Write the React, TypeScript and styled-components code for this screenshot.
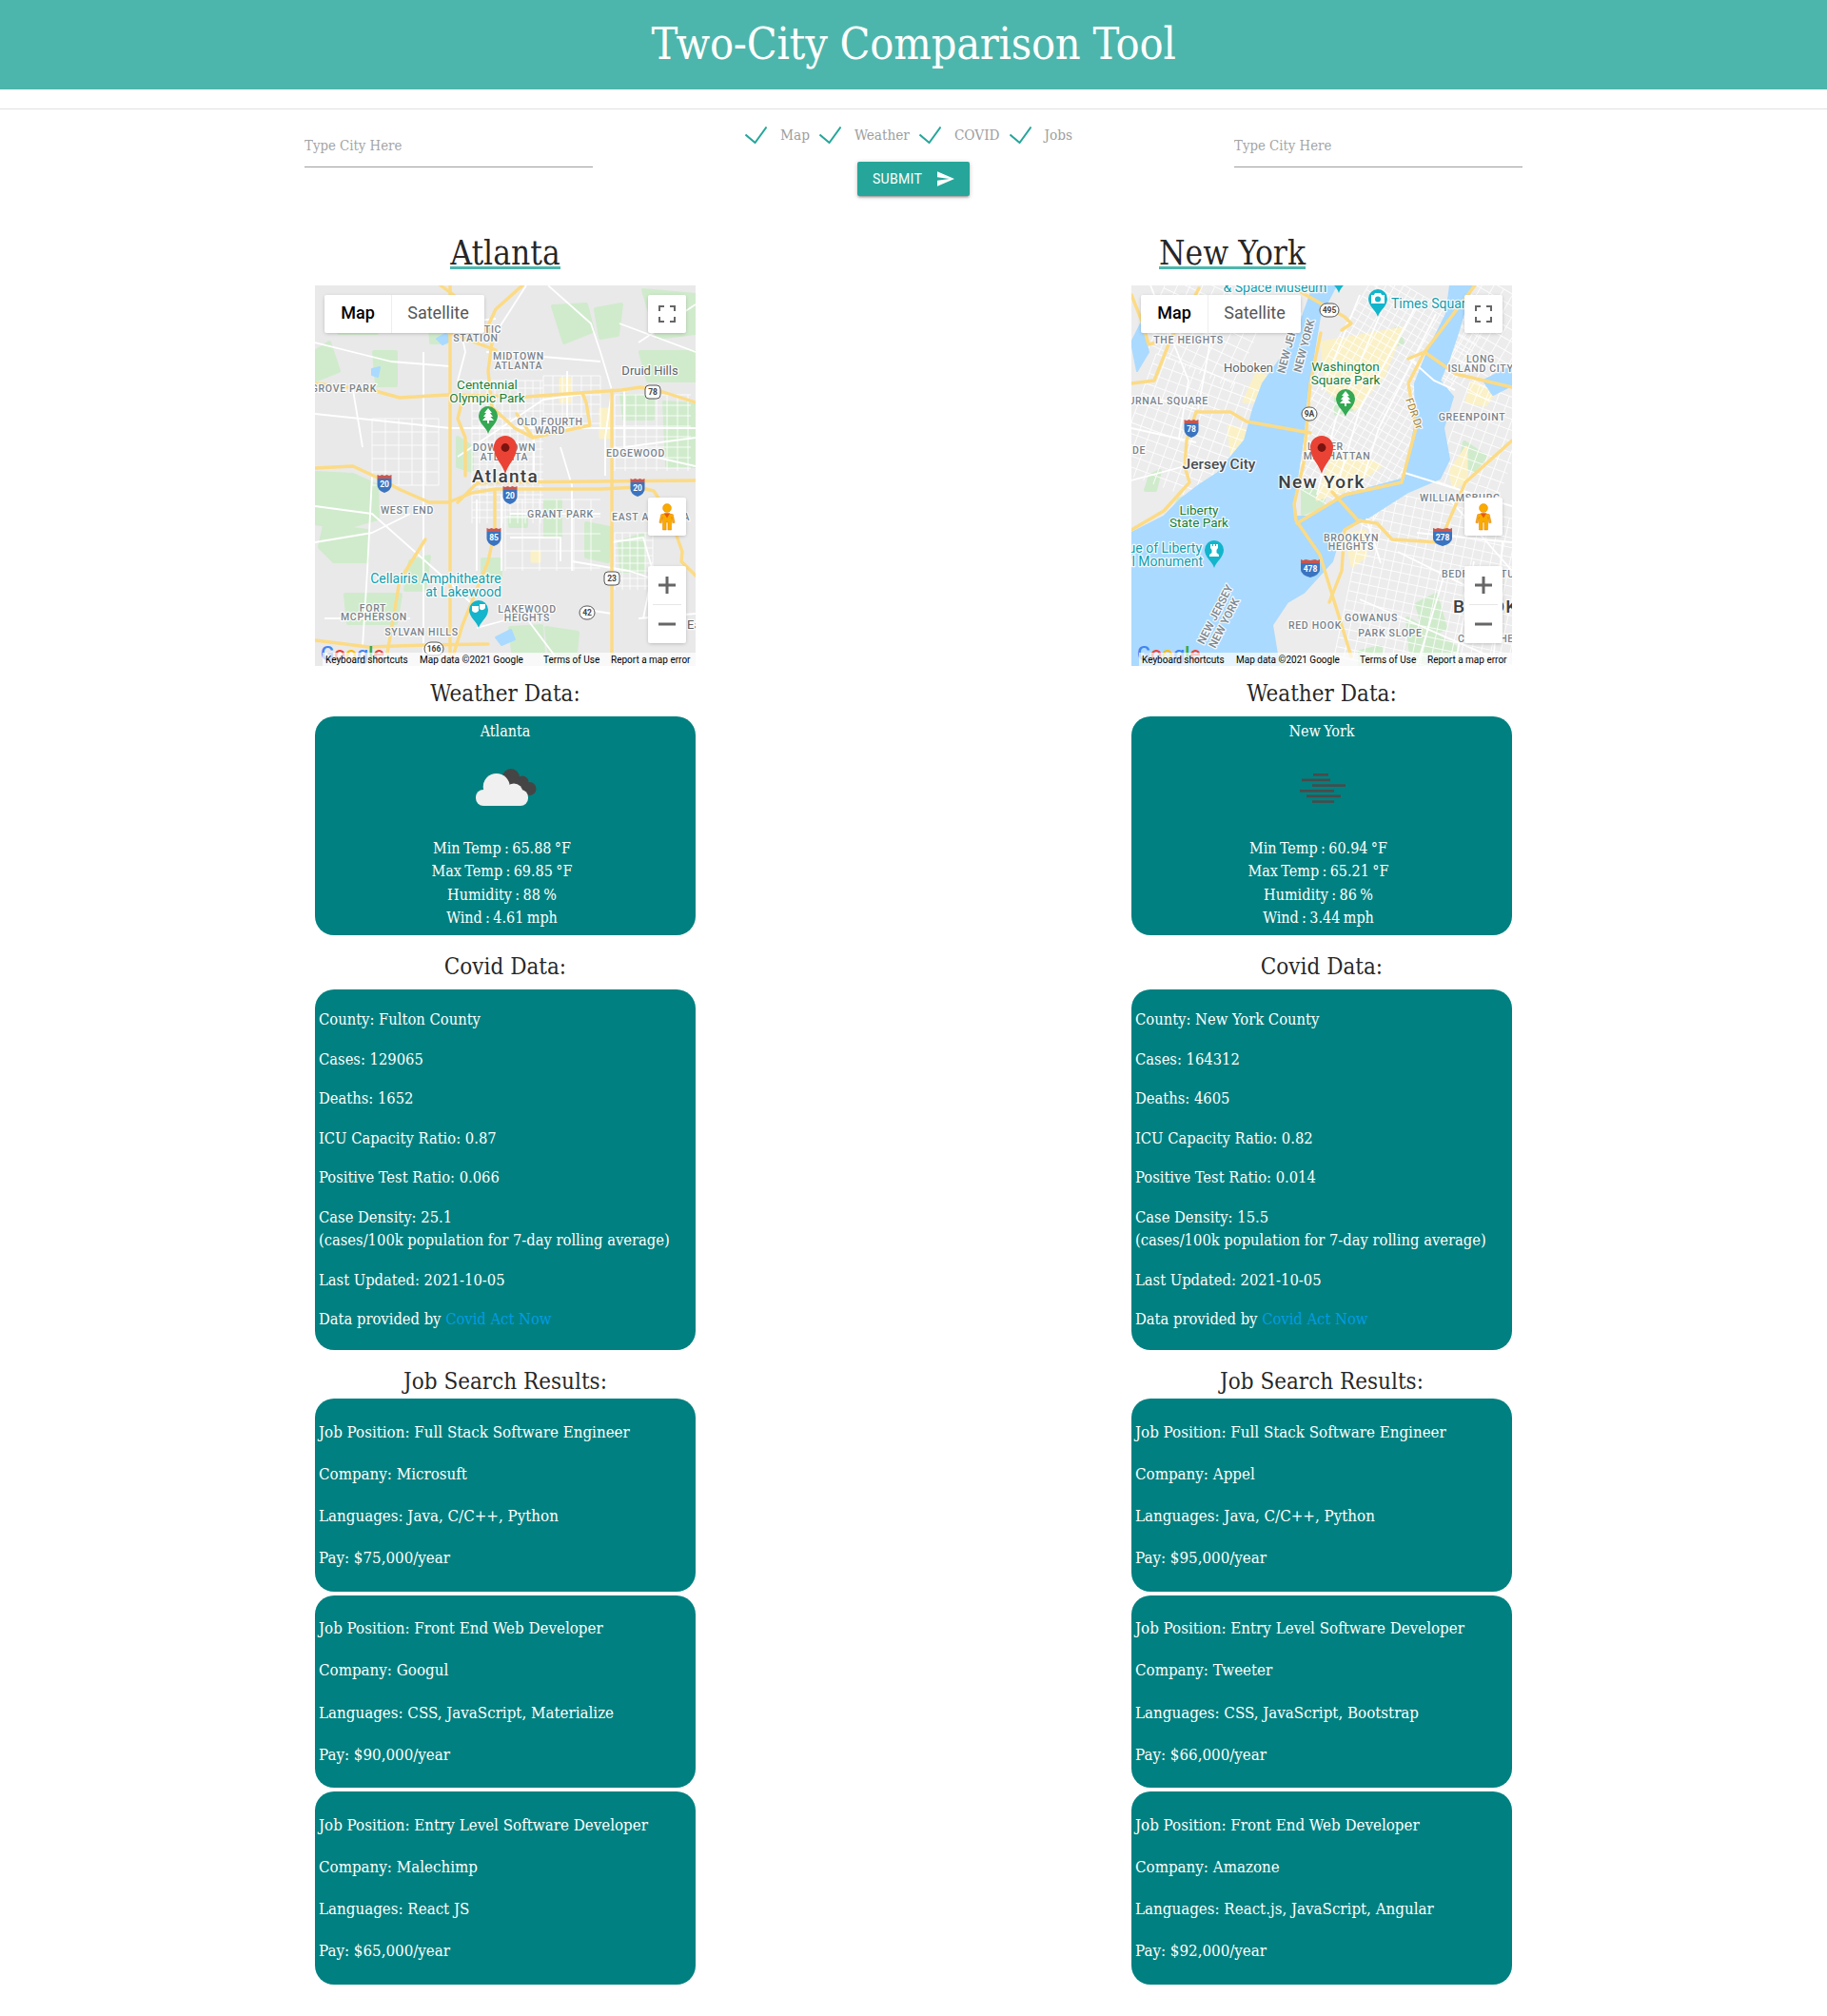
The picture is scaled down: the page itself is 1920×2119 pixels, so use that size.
import React from "react";
import styled, { createGlobalStyle, css } from "styled-components";

const SERIF = `"DejaVu Serif Condensed", "DejaVu Serif", "Liberation Serif", serif`;
const ROBOTO = `Roboto, "Liberation Sans", sans-serif`;

const GlobalStyle = createGlobalStyle`
  html, body { margin: 0; padding: 0; background: #fff; }
  body { font-family: ${SERIF}; color: rgba(0, 0, 0, 0.87); }
  * { box-sizing: border-box; }
`;

const Header = styled.header`
  height: 94px;
  padding-bottom: 3px;
  background: #4db6ac;
  display: flex;
  align-items: center;
  justify-content: center;
`;

const Title = styled.h1`
  margin: 0;
  font-size: 46.4px;
  font-weight: 400;
  color: #fff;
  letter-spacing: -0.2px;
`;

const Divider = styled.hr`
  margin: 20px 0 0;
  border: 0;
  height: 1px;
  background: #e0e0e0;
`;

const SearchForm = styled.form`
  height: 125px;
  padding: 0 320px;
  display: grid;
  grid-template-columns: 303px 1fr 303px;
`;

const CityInput = styled.input`
  width: 100%;
  height: 46px;
  margin-top: 15px;
  padding: 0;
  border: 0;
  border-bottom: 1px solid #9e9e9e;
  outline: none;
  background: transparent;
  font-family: ${SERIF};
  font-size: 14.8px;
  &::placeholder { color: #a5a5a5; opacity: 1; }
`;

const Middle = styled.div`
  display: flex;
  flex-direction: column;
  align-items: center;
`;

const Options = styled.div`
  display: flex;
  margin-top: 16px;
  height: 21px;
`;

const Option = styled.label`
  display: flex;
  align-items: center;
  margin-right: 10px;
  font-size: 15.2px;
  color: #9e9e9e;
  svg { margin-right: 14px; }
`;

const SubmitButton = styled.button`
  margin-top: 18px;
  width: 118px;
  height: 36px;
  display: flex;
  align-items: center;
  justify-content: center;
  gap: 16px;
  border: 0;
  border-radius: 2px;
  background: #26a69a;
  color: #fff;
  font-family: ${ROBOTO};
  font-size: 14px;
  letter-spacing: 0.3px;
  box-shadow: 0 2px 2px 0 rgba(0, 0, 0, 0.14), 0 3px 1px -2px rgba(0, 0, 0, 0.12), 0 1px 5px 0 rgba(0, 0, 0, 0.2);
`;

const CityTitles = styled.div`
  display: grid;
  grid-template-columns: 400px 400px;
  column-gap: 364px;
  padding-left: 331px;
  height: 60px;
`;

const CityTitle = styled.h2`
  justify-self: center;
  margin: 0;
  height: 43px;
  font-size: 35px;
  line-height: 52px;
  font-weight: 400;
  border-bottom: 3px solid #4db6ac;
`;

const Columns = styled.main`
  display: grid;
  grid-template-columns: 400px 400px;
  column-gap: 458px;
  justify-content: center;
  padding-bottom: 33px;
`;

const Column = styled.section`
  display: flex;
  flex-direction: column;
`;

const SectionHeading = styled.h3<{ $top: number; $bottom: number }>`
  margin: 0;
  padding: ${(p) => p.$top}px 0 ${(p) => p.$bottom}px;
  font-size: 24px;
  line-height: 30px;
  font-weight: 400;
  text-align: center;
`;

const Card = styled.div`
  background: #008080;
  color: #fff;
  border-radius: 20px;
  font-size: 16.4px;
  line-height: 24.5px;
`;

const WeatherCard = styled(Card)`
  height: 230px;
  padding-top: 4px;
  text-align: center;
  font-size: 16px;
  word-spacing: -1.2px;
  svg { display: block; margin: -2px auto 0; }
`;

const WeatherLine = styled.div`
  padding-right: 7px;
`;

const CovidCard = styled(Card)`
  height: 379px;
  padding: 20px 4px 0;
  p { margin: 0 0 17px; }
  a { color: #039be5; text-decoration: none; }
`;

const JobList = styled.div`
  display: flex;
  flex-direction: column;
  gap: 4px;
`;

const JobCard = styled(Card)`
  height: 202.5px;
  padding: 22.5px 4px 0;
  font-size: 16.8px;
  p { margin: 0 0 19.8px; }
`;

/* ---------- map ---------- */

const MapFrame = styled.div`
  position: relative;
  width: 400px;
  height: 400px;
  overflow: hidden;
  font-family: ${ROBOTO};
`;

const MapDrawing = styled.svg`
  display: block;
`;

const labelKinds = {
  area: css`
    font-size: 10.5px;
    font-weight: 500;
    letter-spacing: 0.7px;
    fill: #79838c;
  `,
  place: css`
    font-size: 13px;
    fill: #5f6368;
  `,
  town: css`
    font-size: 15.5px;
    font-weight: 500;
    fill: #4a4d50;
  `,
  park: css`
    font-size: 13.5px;
    fill: #188038;
  `,
  poi: css`
    font-size: 14px;
    fill: #129eaf;
  `,
  city: css`
    font-size: 19px;
    font-weight: 500;
    letter-spacing: 1.3px;
    fill: #3c4043;
  `,
  road: css`
    font-size: 11px;
    fill: #a5802f;
  `,
  state: css`
    font-size: 11.5px;
    font-weight: 500;
    fill: #80868b;
  `,
};

type LabelKind = keyof typeof labelKinds;

const MapLabel = styled.text<{ $kind: LabelKind }>`
  font-family: ${ROBOTO};
  paint-order: stroke;
  stroke: rgba(255, 255, 255, 0.85);
  stroke-width: 2.5px;
  stroke-linejoin: round;
  ${(p) => labelKinds[p.$kind]}
`;

const ShieldText = styled.text`
  font-family: ${ROBOTO};
  font-size: 8.5px;
  font-weight: 700;
  text-anchor: middle;
`;

const GoogleMark = styled.text`
  font-family: ${ROBOTO};
  font-size: 21px;
  font-weight: 500;
`;

const ControlBox = styled.div`
  position: absolute;
  background: #fff;
  border-radius: 2px;
  box-shadow: 0 1px 4px -1px rgba(0, 0, 0, 0.3);
`;

const MapTypes = styled(ControlBox)`
  top: 10px;
  left: 10px;
  width: 168px;
  height: 40px;
  display: grid;
  grid-template-columns: 70px 98px;
`;

const MapType = styled.span<{ $active?: boolean }>`
  display: flex;
  align-items: center;
  justify-content: center;
  padding-bottom: 4px;
  font-size: 18px;
  font-weight: ${(p) => (p.$active ? 500 : 400)};
  color: ${(p) => (p.$active ? "#000" : "#565656")};
  & + & { border-left: 1px solid #eee; }
`;

const IconControl = styled(ControlBox)<{ $top: number }>`
  top: ${(p) => p.$top}px;
  right: 10px;
  width: 40px;
  height: 40px;
  display: flex;
  align-items: center;
  justify-content: center;
`;

const ZoomControl = styled(ControlBox)`
  top: 295px;
  right: 10px;
  width: 40px;
  height: 81px;
  display: grid;
  grid-template-rows: 40px 1px 40px;
  justify-items: center;
  align-items: center;
`;

const ZoomRule = styled.div`
  width: 30px;
  height: 1px;
  background: #e6e6e6;
`;

const Attribution = styled.div`
  position: absolute;
  left: 8px;
  right: 0;
  bottom: 0;
  height: 14px;
  padding-left: 3px;
  display: grid;
  grid-template-columns: 99px 130px 71px auto;
  align-items: center;
  background: rgba(255, 255, 255, 0.7);
  font-size: 10px;
  color: #000;
  white-space: nowrap;
`;

type Label = [LabelKind, string, number, number, ("start" | "middle" | "end")?, number?];
type Shield = ["i" | "us" | "st", string, number, number];
type Poi = ["park" | "show" | "photo" | "statue", number, number];
// x, y, width, height, spacing, rotation
type StreetGrid = [number, number, number, number, number, number];

type MapData = {
  land: string;
  water?: string[];
  parks: string[];
  blocks?: string[];
  grids: StreetGrid[];
  minor: string[];
  bridges?: string[];
  highways: string[];
  labels: Label[];
  shields: Shield[];
  pois: Poi[];
};

const atlanta: MapData = {
  land: "#e9e9e9",
  water: ["128,56 138,50 142,58 134,62", "60,88 68,86 66,96 60,94", "190,370 206,362 210,372 196,378"],
  parks: [
    "0,197 40,199 65,210 66,245 30,255 0,250",
    "10,252 55,258 55,290 20,290 5,275",
    "22,25 65,27 65,50 25,50",
    "62,70 85,70 85,105 65,105",
    "250,22 285,20 292,48 262,60",
    "295,25 322,20 318,52 300,55",
    "342,70 400,70 400,100 350,100",
    "367,123 400,125 400,190 370,190",
    "322,115 355,118 355,140 325,140",
    "242,226 258,226 258,263 242,263",
    "205,243 222,243 222,253 205,253",
    "176,288 195,288 195,310 176,310",
    "205,360 238,358 240,385 208,385",
    "243,360 276,365 274,387 246,384",
    "243,388 282,388 282,400 243,400",
    "32,325 90,325 85,355 35,355",
    "0,70 15,60 25,90 0,100",
    "345,5 400,10 400,50 360,55",
    "120,30 140,30 138,60 122,60",
    "150,160 165,170 165,195 150,190",
    "285,250 310,255 308,290 285,285",
    "320,270 345,262 345,300 322,300",
    "100,290 120,285 115,320 95,320",
  ],
  blocks: ["258,98 268,98 268,122 258,122", "228,280 236,280 236,290 228,290", "300,130 312,130 312,160 300,160"],
  grids: [
    [165, 100, 75, 150, 8, 0],
    [240, 95, 60, 55, 10, 0],
    [315, 115, 80, 80, 11, 0],
    [315, 260, 40, 60, 8, 0],
    [60, 140, 70, 70, 14, 0],
    [200, 225, 100, 75, 18, 0],
  ],
  minor: [
    "114,70 114,400", "0,135 142,150 230,150 400,150", "0,232 60,240 150,320 175,345", "60,200 55,300 50,380",
    "222,0 190,50", "245,0 290,40 300,70 312,110 305,160 305,200", "150,180 240,120 312,110", "196,220 196,300", "258,170 270,210 270,300",
    "170,225 170,300", "205,240 300,240", "205,265 258,265 258,290", "180,70 300,80", "265,90 265,145", "325,110 325,170 400,160",
    "340,60 400,20", "312,170 400,190", "270,290 330,300 360,310", "215,340 260,400", "170,360 225,345", "0,270 60,260 100,240",
    "312,270 345,265 355,300 345,350", "150,100 158,70 150,30", "0,60 80,80 142,85", "10,350 100,350", "340,350 400,345", "230,205 230,160",
    "320,40 400,70", "40,110 50,170", "280,340 312,345", "140,40 190,35",
  ],
  highways: [
    "0,192 40,190 72,205 88,214 120,228 140,228 165,218 190,214 300,214 340,212 356,216 372,240 386,280 385,290 400,305",
    "0,103 60,110 89,118 139,115 222,117 279,113 322,110 342,107 369,113 400,123",
    "142,0 142,400",
    "312,110 312,400",
    "150,228 170,208 189,207 400,205",
    "218,0 190,25 182,42 186,60 182,90 186,128 210,150 229,160 289,147 285,123 281,113",
    "132,0 170,28 186,60",
    "229,160 212,135",
    "189,217 189,257 182,290 155,357 146,387",
    "116,267 89,310 76,387",
    "155,120 150,140 158,160 158,200",
    "0,373 56,380 116,378 182,377",
    "142,50 190,68",
  ],
  labels: [
    ["area", "TIC", 187, 50, "middle"],
    ["area", "STATION", 169, 59, "middle"],
    ["area", "MIDTOWN", 214, 78, "middle"],
    ["area", "ATLANTA", 214, 88, "middle"],
    ["area", "GROVE PARK", 65, 112, "end"],
    ["area", "OLD FOURTH", 247, 147, "middle"],
    ["area", "WARD", 247, 156, "middle"],
    ["area", "DOWNTOWN", 199, 174, "middle"],
    ["area", "ATLANTA", 199, 184, "middle"],
    ["area", "EDGEWOOD", 337, 180, "middle"],
    ["area", "WEST END", 97, 240, "middle"],
    ["area", "GRANT PARK", 258, 244, "middle"],
    ["area", "EAST ATLANTA", 312, 247],
    ["area", "FORT", 61, 343, "middle"],
    ["area", "MCPHERSON", 62, 352, "middle"],
    ["area", "SYLVAN HILLS", 112, 368, "middle"],
    ["area", "LAKEWOOD", 223, 344, "middle"],
    ["area", "HEIGHTS", 223, 353, "middle"],
    ["place", "Druid Hills", 352, 94, "middle"],
    ["place", "East Point", 391, 361],
    ["park", "Centennial", 181, 109, "middle"],
    ["park", "Olympic Park", 181, 123, "middle"],
    ["poi", "Cellairis Amphitheatre", 127, 313, "middle"],
    ["poi", "at Lakewood", 156, 327, "middle"],
    ["city", "Atlanta", 200, 207, "middle"],
  ],
  shields: [
    ["i", "20", 73, 208],
    ["i", "20", 205, 220],
    ["i", "20", 339, 212],
    ["i", "85", 188, 264],
    ["us", "78", 355, 112],
    ["us", "23", 312, 308],
    ["st", "42", 286, 344],
    ["st", "166", 125, 382],
  ],
  pois: [
    ["park", 182, 127],
    ["show", 172, 331],
  ],
};

const newYork: MapData = {
  land: "#ececec",
  water: [
    "188,10 171,57 138,103 128,130 119,163 91,197 71,210 54,223 34,243 0,260 0,400 155,400 148,357 164,333 181,323 211,290 221,257 244,247 291,217 324,203 334,183 328,150 338,117 324,100 334,77 344,47 358,0 335,0 331,30 311,70 298,103 299,143 287,203 224,220 187,243 173,243 171,223 181,157 184,117 198,33 215,0 190,0",
    "0,60 10,40 18,70 6,90",
    "370,100 400,85 400,105 380,115",
  ],
  parks: [
    "50,225 90,212 102,240 105,262 60,262 40,245",
    "140,290 180,282 188,300 165,325 140,332 142,312",
    "215,100 232,100 232,130 215,135",
    "290,350 340,380 350,400 295,400",
    "240,385 262,380 262,400 240,400",
    "350,165 372,180 360,195 345,190",
    "120,395 160,390 160,400 120,400",
    "20,200 30,195 25,215 15,215",
    "270,50 280,45 285,60 272,65",
    "300,335 320,325 330,360 310,370",
    "180,215 205,215 200,232 180,240",
  ],
  blocks: [
    "200,60 285,45 265,95 235,130 205,110",
    "210,185 235,175 262,190 230,212 195,225",
    "102,148 120,152 116,186 106,186",
    "132,92 142,96 128,122 118,122",
    "335,195 352,170 352,206 338,212",
    "225,262 246,258 246,285 232,295",
    "358,102 382,112 372,126 352,122",
  ],
  grids: [
    [190, 0, 130, 240, 8, 30],
    [230, 230, 180, 180, 10, 12],
    [0, 90, 130, 130, 11, 20],
    [20, 0, 110, 90, 12, 25],
    [330, 0, 80, 110, 11, 30],
    [335, 110, 70, 110, 11, 20],
  ],
  minor: [
    "240,10 200,110", "270,10 215,140 195,220", "300,20 240,130 215,215", "320,30 260,150 240,215",
    "0,150 68,165", "0,205 56,190", "30,120 68,130", "20,0 60,100 50,160", "90,20 70,130",
    "330,220 400,300", "300,260 400,270", "280,280 400,340", "240,330 400,400", "330,300 300,400", "360,290 340,400", "390,270 380,400",
  ],
  bridges: ["284,196 400,232", "247,245 262,292", "291,76 318,100 340,110"],
  highways: [
    "68,133 104,133 121,143 188,155",
    "68,133 58,163 56,190 61,207 34,237 0,257",
    "188,103 181,187 171,230 173,247 198,283 231,390",
    "308,70 291,103 299,150 284,207 224,220 174,250",
    "211,217 238,247 258,250 274,267 324,270 351,207 400,163",
    "241,247 224,257 221,300 208,333",
    "178,7 224,33 231,40 221,47",
    "199,50 188,103",
    "361,0 308,70 291,77",
    "308,70 341,93 400,107",
    "0,103 24,100 41,57 71,3",
    "0,10 12,40 18,62 26,60",
  ],
  labels: [
    ["poi", "& Space Museum", 151, 7, "middle"],
    ["poi", "Times Square", 273, 24],
    ["area", "THE HEIGHTS", 60, 61, "middle"],
    ["place", "Hoboken", 123, 91, "middle"],
    ["state", "NEW JERSEY", 161, 93, "start", -75],
    ["state", "NEW YORK", 178, 92, "start", -75],
    ["park", "Washington", 225, 90, "middle"],
    ["park", "Square Park", 225, 104, "middle"],
    ["area", "LONG", 367, 81, "middle"],
    ["area", "ISLAND CITY", 367, 91, "middle"],
    ["area", "JOURNAL SQUARE", 81, 125, "end"],
    ["area", "GREENPOINT", 358, 142, "middle"],
    ["road", "FDR Dr", 288, 120, "start", 70],
    ["town", "Jersey City", 92, 193, "middle"],
    ["area", "DE", 1, 177],
    ["area", "LOWER", 204, 173, "middle"],
    ["area", "MANHATTAN", 216, 183, "middle"],
    ["area", "WILLIAMSBURG", 303, 227],
    ["park", "Liberty", 71, 241, "middle"],
    ["park", "State Park", 71, 254, "middle"],
    ["poi", "Statue of Liberty", 74, 281, "end"],
    ["poi", "National Monument", 75, 295, "end"],
    ["area", "BROOKLYN", 231, 269, "middle"],
    ["area", "HEIGHTS", 231, 278, "middle"],
    ["area", "BEDFORD-STUY", 326, 307],
    ["city", "BROOKLYN", 338, 344],
    ["area", "CROWN HEIGHTS", 343, 375],
    ["area", "GOWANUS", 252, 353, "middle"],
    ["area", "RED HOOK", 193, 361, "middle"],
    ["area", "PARK SLOPE", 272, 369, "middle"],
    ["state", "NEW JERSEY", 76, 378, "start", -63],
    ["state", "NEW YORK", 88, 382, "start", -63],
    ["city", "New York", 200, 213, "middle"],
  ],
  shields: [
    ["st", "495", 208, 26],
    ["st", "9A", 187, 135],
    ["i", "78", 63, 150],
    ["i", "278", 327, 264],
    ["i", "478", 188, 297],
  ],
  pois: [
    ["photo", 259, 4],
    ["park", 225, 109],
    ["statue", 87, 268],
    ["show", 218, -21],
  ],
};

const RoadShield = ({ type, text, x, y }: { type: Shield[0]; text: string; x: number; y: number }) => {
  if (type === "i") {
    const w = text.length > 2 ? 10 : 7.5;
    return (
      <g transform={`translate(${x} ${y})`}>
        <path d={`M${-w} -5 H${w} V2 Q${w} 7 0 10 Q${-w} 7 ${-w} 2 Z`} fill="#3a74c0" />
        <path d={`M${-w} -9 l2.5 1 l2.5 -1 l${w - 5} 1 l${w - 5} -1 l2.5 1 l2.5 -1 V-5 H${-w} Z`} fill="#c8564f" />
        <ShieldText y="3.5" fill="#fff">{text}</ShieldText>
      </g>
    );
  }
  const rx = text.length > 2 ? 10 : 8;
  return (
    <g transform={`translate(${x} ${y})`}>
      <rect x={-rx} y="-7" width={rx * 2} height="14" rx={type === "st" ? 7 : 4} fill="#fff" stroke="#444" strokeWidth="0.9" />
      <ShieldText y="3" fill="#444">{text}</ShieldText>
    </g>
  );
};

const PoiPin = ({ type, x, y }: { type: Poi[0]; x: number; y: number }) => {
  const fill = type === "park" ? "#34a853" : "#12b5cb";
  return (
    <g transform={`translate(${x} ${y})`}>
      <path d="M0 29 C-2 22 -10 18 -10 10 A10 10 0 1 1 10 10 C10 18 2 22 0 29 Z" fill={fill} />
      {type === "park" && <path d="M0 2 L4 7 H2 L5 11 H2.5 L6 15 H1 V18 H-1 V15 H-6 L-2.5 11 H-5 L-2 7 H-4 Z" fill="#fff" />}
      {type === "show" && (
        <>
          <path d="M-7 6 H0 V11 Q-3.5 15 -7 11 Z" fill="#fff" />
          <path d="M1 4 H7 V8 Q4 12 1 9 Z" fill="#fff" />
        </>
      )}
      {type === "photo" && (
        <path d="M-7 6 H-4 L-3 4 H3 L4 6 H7 V15 H-7 Z M0 7.5 A3 3 0 1 0 0 13.5 A3 3 0 1 0 0 7.5 Z" fill="#fff" fillRule="evenodd" />
      )}
      {type === "statue" && <path d="M-4 4 H-2 V6 H-1 V4 H1 V6 H2 V4 H4 V8 L2.5 10 V13 L5 15 V17 H-5 V15 L-2.5 13 V10 L-4 8 Z" fill="#fff" />}
    </g>
  );
};

const gridPath = ([x, y, w, h, step]: StreetGrid) => {
  let d = "";
  for (let i = 0; i <= w; i += step) d += `M${x + i} ${y}V${y + h}`;
  for (let j = 0; j <= h; j += step) d += `M${x} ${y + j}H${x + w}`;
  return d;
};

const CityMap = ({ data }: { data: MapData }) => (
  <MapFrame>
    <MapDrawing width="400" height="400" viewBox="0 0 400 400">
      <rect width="400" height="400" fill={data.land} />
      {data.parks.map((p) => (
        <polygon key={p} points={p} fill="#d0ebcc" stroke="#d0ebcc" strokeWidth="4" strokeLinejoin="round" />
      ))}
      {data.blocks?.map((p) => (
        <polygon key={p} points={p} fill="#fbf1c7" stroke="#fbf1c7" strokeWidth="3" strokeLinejoin="round" />
      ))}
      {data.grids.map((g) => (
        <path
          key={g.join()}
          d={gridPath(g)}
          fill="none"
          stroke="#fff"
          strokeWidth="1"
          opacity="0.85"
          transform={`rotate(${g[5]} ${g[0] + g[2] / 2} ${g[1] + g[3] / 2})`}
        />
      ))}
      {data.minor.map((p) => (
        <polyline key={p} points={p} fill="none" stroke="#fff" strokeWidth="1.8" strokeLinejoin="round" />
      ))}
      {data.water?.map((p) => (
        <polygon key={p} points={p} fill="#aadaff" stroke="#aadaff" strokeWidth="2" strokeLinejoin="round" />
      ))}
      {data.bridges?.map((p) => (
        <polyline key={p} points={p} fill="none" stroke="#fff" strokeWidth="2" />
      ))}
      {data.highways.map((p) => (
        <polyline key={p} points={p} fill="none" stroke="#fcdb85" strokeWidth="3.4" strokeLinejoin="round" strokeLinecap="round" />
      ))}
      {data.labels.map(([kind, text, x, y, anchor, rotate]) => (
        <MapLabel
          key={`${text}-${x}`}
          $kind={kind}
          x={x}
          y={y}
          textAnchor={anchor ?? "start"}
          transform={rotate ? `rotate(${rotate} ${x} ${y})` : undefined}
        >
          {text}
        </MapLabel>
      ))}
      {data.shields.map(([type, text, x, y]) => (
        <RoadShield key={`${text}-${x}`} type={type} text={text} x={x} y={y} />
      ))}
      {data.pois.map(([type, x, y]) => (
        <PoiPin key={`${type}-${x}`} type={type} x={x} y={y} />
      ))}
      <path d="M200 198 C197 187 188 182 188 170 A12 12 0 1 1 212 170 C212 182 203 187 200 198 Z" fill="#ea4335" />
      <circle cx="200" cy="170.5" r="4.4" fill="#7a1410" />
      <GoogleMark x="6" y="394">
        <tspan fill="#4285f4">G</tspan>
        <tspan fill="#ea4335">o</tspan>
        <tspan fill="#fbbc05">o</tspan>
        <tspan fill="#4285f4">g</tspan>
        <tspan fill="#34a853">l</tspan>
        <tspan fill="#ea4335">e</tspan>
      </GoogleMark>
    </MapDrawing>
    <MapTypes>
      <MapType $active>Map</MapType>
      <MapType>Satellite</MapType>
    </MapTypes>
    <IconControl $top={10}>
      <svg width="18" height="18" viewBox="0 0 18 18" fill="none" stroke="#666" strokeWidth="2">
        <path d="M1 6V1H6M12 1H17V6M17 12V17H12M6 17H1V12" />
      </svg>
    </IconControl>
    <IconControl $top={223}>
      <svg width="18" height="29" viewBox="0 0 20 32">
        <path
          d="M3 13 Q10 10 17 13 L19 22.5 L16.5 23 L15.2 16 L15 31 H11 V22 H9 V31 H5 L4.8 16 L3.5 23 L1 22.5 Z"
          fill="#f9ab00"
          stroke="#e37400"
          strokeWidth="0.5"
        />
        <circle cx="10" cy="5.5" r="5" fill="#f9ab00" stroke="#e37400" strokeWidth="0.4" />
        <path d="M6.5 11.5 H13.5 L10 17 Z" fill="#e8590c" />
      </svg>
    </IconControl>
    <ZoomControl>
      <svg width="18" height="18" viewBox="0 0 18 18" fill="#666">
        <path d="M7.5 0H10.5V7.5H18V10.5H10.5V18H7.5V10.5H0V7.5H7.5Z" />
      </svg>
      <ZoomRule />
      <svg width="18" height="18" viewBox="0 0 18 18" fill="#666">
        <path d="M0 7.5H18V10.5H0Z" />
      </svg>
    </ZoomControl>
    <Attribution>
      <span>Keyboard shortcuts</span>
      <span>Map data ©2021 Google</span>
      <span>Terms of Use</span>
      <span>Report a map error</span>
    </Attribution>
  </MapFrame>
);

/* ---------- weather icons ---------- */

const CloudIcon = () => (
  <svg width="100" height="100" viewBox="0 0 100 100">
    <g fill="#454545">
      <circle cx="56" cy="37" r="9" />
      <circle cx="68" cy="42" r="6.5" />
      <circle cx="75.5" cy="49" r="7" />
      <path d="M52 34 L72 42 L72 56 L58 52 Z" />
    </g>
    <g fill="#f0f0f0">
      <circle cx="40.7" cy="47" r="14" />
      <circle cx="59" cy="53" r="9.5" />
      <rect x="19" y="50" width="55" height="17" rx="8" />
    </g>
  </svg>
);

const FogIcon = () => (
  <svg width="100" height="100" viewBox="0 0 100 100" fill="#4a4a4a">
    {[
      [41, 33, 16],
      [29, 38.6, 30],
      [40, 44.3, 35],
      [27, 50, 36],
      [34, 55.6, 36],
      [40, 61.3, 23],
    ].map(([x, y, w]) => (
      <rect key={y} x={x} y={y} width={w} height="2.6" />
    ))}
  </svg>
);

/* ---------- data ---------- */

type City = {
  name: string;
  map: MapData;
  icon: React.ReactNode;
  weather: string[];
  covid: { county: string; cases: string; deaths: string; icu: string; positive: string; density: string };
  jobs: { position: string; company: string; languages: string; pay: string }[];
};

const cities: City[] = [
  {
    name: "Atlanta",
    map: atlanta,
    icon: <CloudIcon />,
    weather: ["Min Temp : 65.88 °F", "Max Temp : 69.85 °F", "Humidity : 88 %", "Wind : 4.61 mph"],
    covid: { county: "Fulton County", cases: "129065", deaths: "1652", icu: "0.87", positive: "0.066", density: "25.1" },
    jobs: [
      { position: "Full Stack Software Engineer", company: "Microsuft", languages: "Java, C/C++, Python", pay: "$75,000/year" },
      { position: "Front End Web Developer", company: "Googul", languages: "CSS, JavaScript, Materialize", pay: "$90,000/year" },
      { position: "Entry Level Software Developer", company: "Malechimp", languages: "React JS", pay: "$65,000/year" },
    ],
  },
  {
    name: "New York",
    map: newYork,
    icon: <FogIcon />,
    weather: ["Min Temp : 60.94 °F", "Max Temp : 65.21 °F", "Humidity : 86 %", "Wind : 3.44 mph"],
    covid: { county: "New York County", cases: "164312", deaths: "4605", icu: "0.82", positive: "0.014", density: "15.5" },
    jobs: [
      { position: "Full Stack Software Engineer", company: "Appel", languages: "Java, C/C++, Python", pay: "$95,000/year" },
      { position: "Entry Level Software Developer", company: "Tweeter", languages: "CSS, JavaScript, Bootstrap", pay: "$66,000/year" },
      { position: "Front End Web Developer", company: "Amazone", languages: "React.js, JavaScript, Angular", pay: "$92,000/year" },
    ],
  },
];

const Check = () => (
  <svg width="23" height="18" viewBox="0 0 23 18" fill="none" stroke="#26a69a" strokeWidth="2">
    <path d="M0.5 8.5 L10.5 17 L22.5 0.5" />
  </svg>
);

const App = () => (
  <>
    <GlobalStyle />
    <Header>
      <Title>Two-City Comparison Tool</Title>
    </Header>
    <Divider />
    <SearchForm>
      <CityInput placeholder="Type City Here" />
      <Middle>
        <Options>
          {["Map", "Weather", "COVID", "Jobs"].map((o) => (
            <Option key={o}>
              <Check />
              {o}
            </Option>
          ))}
        </Options>
        <SubmitButton type="button">
          SUBMIT
          <svg width="18" height="16" viewBox="2 3 21 18" fill="#fff">
            <path d="M2.01 21L23 12 2.01 3 2 10l15 2-15 2z" />
          </svg>
        </SubmitButton>
      </Middle>
      <CityInput placeholder="Type City Here" />
    </SearchForm>
    <CityTitles>
      {cities.map((c) => (
        <CityTitle key={c.name}>{c.name}</CityTitle>
      ))}
    </CityTitles>
    <Columns>
      {cities.map((c) => (
        <Column key={c.name}>
          <CityMap data={c.map} />
          <SectionHeading $top={14} $bottom={9}>Weather Data:</SectionHeading>
          <WeatherCard>
            {c.name}
            {c.icon}
            {c.weather.map((w) => (
              <WeatherLine key={w}>{w}</WeatherLine>
            ))}
          </WeatherCard>
          <SectionHeading $top={18} $bottom={9}>Covid Data:</SectionHeading>
          <CovidCard>
            <p>County: {c.covid.county}</p>
            <p>Cases: {c.covid.cases}</p>
            <p>Deaths: {c.covid.deaths}</p>
            <p>ICU Capacity Ratio: {c.covid.icu}</p>
            <p>Positive Test Ratio: {c.covid.positive}</p>
            <p>
              Case Density: {c.covid.density}
              <br />
              (cases/100k population for 7-day rolling average)
            </p>
            <p>Last Updated: 2021-10-05</p>
            <p>
              Data provided by <a href="#covid">Covid Act Now</a>
            </p>
          </CovidCard>
          <SectionHeading $top={18} $bottom={3}>Job Search Results:</SectionHeading>
          <JobList>
            {c.jobs.map((j) => (
              <JobCard key={j.position}>
                <p>Job Position: {j.position}</p>
                <p>Company: {j.company}</p>
                <p>Languages: {j.languages}</p>
                <p>Pay: {j.pay}</p>
              </JobCard>
            ))}
          </JobList>
        </Column>
      ))}
    </Columns>
  </>
);

export default App;
